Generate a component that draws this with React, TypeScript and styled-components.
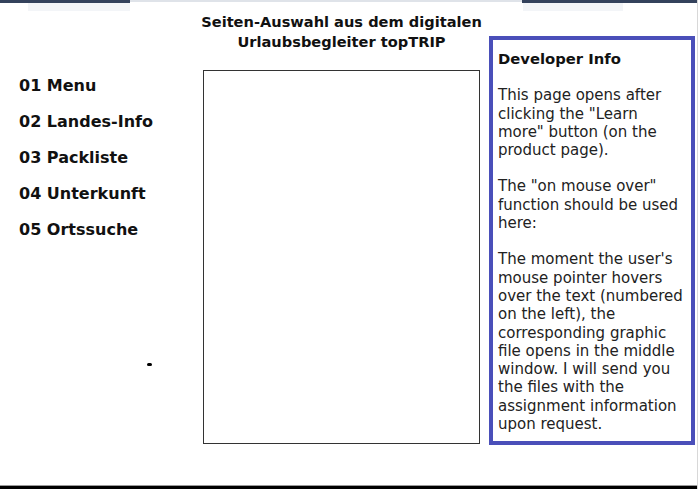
import styled, { createGlobalStyle } from 'styled-components';

const GlobalStyle = createGlobalStyle`
  html, body {
    margin: 0;
    padding: 0;
    background: #ffffff;
  }
  body {
    font-family: "DejaVu Sans", Verdana, sans-serif;
    color: #111;
  }
`;

const menuItems = ['01 Menu', '02 Landes-Info', '03 Packliste', '04 Unterkunft', '05 Ortssuche'];

export default function App() {
  return (
    <Page>
      <GlobalStyle />
      <TopStrip>
        <Segment $dark $width={130} />
        <Segment $width={393} />
        <Segment $dark $width={175} />
      </TopStrip>
      <Shade>
        <ShadeBar $left={28} $width={102} />
        <ShadeBar $left={523} $width={100} />
      </Shade>
      <Main>
        <Menu>
          {menuItems.map((item) => (
            <MenuItem key={item}>{item}</MenuItem>
          ))}
          <Dot />
        </Menu>
        <Center>
          <Title>
            Seiten-Auswahl aus dem digitalen
            <br />
            Urlaubsbegleiter topTRIP
          </Title>
          <Preview />
        </Center>
        <InfoBox>
          <InfoTitle>Developer Info</InfoTitle>
          <InfoText>
            This page opens after clicking the "Learn more" button (on the product page).
          </InfoText>
          <InfoText>The "on mouse over" function should be used here:</InfoText>
          <InfoText>
            The moment the user's mouse pointer hovers over the text (numbered on the left), the
            corresponding graphic file opens in the middle window. I will send you the files with
            the assignment information upon request.
          </InfoText>
        </InfoBox>
      </Main>
      <Footer />
    </Page>
  );
}

const Page = styled.div`
  position: relative;
  width: 698px;
  height: 489px;
  box-sizing: border-box;
  border-right: 1px solid #d8d8d8;
  display: flex;
  flex-direction: column;
  overflow: hidden;
`;

const TopStrip = styled.div`
  display: flex;
  height: 3px;
`;

const Segment = styled.div<{ $dark?: boolean; $width: number }>`
  width: ${(p) => p.$width}px;
  height: ${(p) => (p.$dark ? 3 : 2)}px;
  background: ${(p) => (p.$dark ? '#34425c' : '#dfe3e9')};
`;

const Shade = styled.div`
  position: relative;
  height: 8px;
`;

const ShadeBar = styled.div<{ $left: number; $width: number }>`
  position: absolute;
  top: 0;
  left: ${(p) => p.$left}px;
  width: ${(p) => p.$width}px;
  height: 8px;
  background: #f3f5f8;
`;

const Main = styled.div`
  flex: 1;
  display: grid;
  grid-template-columns: 203px 277px 215px;
  align-items: start;
`;

const Menu = styled.div`
  position: relative;
  display: flex;
  flex-direction: column;
  gap: 17px;
  padding: 65px 0 0 19px;
  height: 100%;
  box-sizing: border-box;
`;

const MenuItem = styled.div`
  font-size: 16px;
  font-weight: bold;
  line-height: 19px;
  color: #111;
`;

const Dot = styled.span`
  position: absolute;
  left: 147px;
  top: 352px;
  width: 5px;
  height: 3px;
  border-radius: 2px;
  background: #000;
`;

const Center = styled.div`
  display: flex;
  flex-direction: column;
  align-items: center;
`;

const Title = styled.div`
  font-size: 14.6px;
  font-weight: bold;
  line-height: 20px;
  text-align: center;
  margin-top: 1px;
  white-space: nowrap;
  color: #111;
`;

const Preview = styled.div`
  margin-top: 18px;
  width: 100%;
  height: 374px;
  box-sizing: border-box;
  border: 1px solid #333;
`;

const InfoBox = styled.div`
  margin: 25px 0 0 9px;
  width: 206px;
  height: 409px;
  box-sizing: border-box;
  border: 4px solid #4a4fb9;
  padding: 8px 7px 0 5px;
  font-size: 15px;
  line-height: 18.3px;
  color: #222;
`;

const InfoTitle = styled.div`
  font-weight: bold;
  font-size: 14.8px;
  color: #111;
  margin-top: 2px;
  margin-bottom: 18px;
`;

const InfoText = styled.p`
  margin: 0 0 18px;
`;

const Footer = styled.div`
  height: 3px;
  border-top: 1px solid #9a9a9a;
  background: #000;
`;
